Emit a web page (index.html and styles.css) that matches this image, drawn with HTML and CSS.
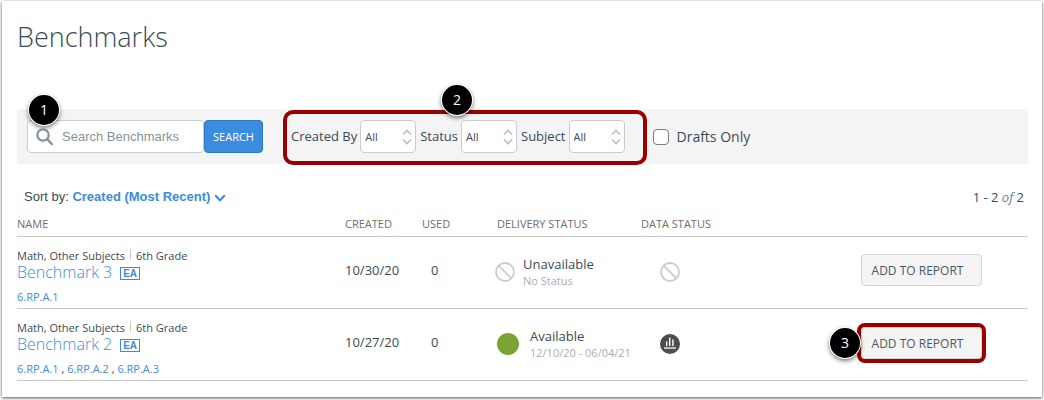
FILE: index.html
```html
<!DOCTYPE html>
<html lang="en">
<head>
    <meta charset="UTF-8">
    <meta name="viewport" content="width=device-width, initial-scale=1.0">
    <title>Benchmarks</title>
    <link rel="stylesheet" href="styles.css">
</head>
<body>

    <main class="page">
        <h1>Benchmarks</h1>

        <form class="toolbar">
            <div class="search">
                <span class="step step-search">1</span>
                <svg class="search-icon" width="18" height="18" viewBox="0 0 18 18">
                    <circle cx="7" cy="7" r="5.7"></circle>
                    <path d="M11.2 11.2 L16.5 16.8"></path>
                </svg>
                <input type="text" class="search-input" placeholder="Search Benchmarks" aria-label="Search Benchmarks">
                <button type="button" class="search-button">SEARCH</button>
            </div>

            <div class="filters">
                <span class="step step-filters">2</span>
                <label for="createdBy">Created By</label>
                <span class="select-box">
                    <select id="createdBy"><option>All</option></select>
                    <svg class="arrows" width="10" height="16" viewBox="0 0 10 16"><path d="M1 5.5 L5 1.5 L9 5.5 M1 10.5 L5 14.5 L9 10.5"></path></svg>
                </span>
                <label for="status">Status</label>
                <span class="select-box">
                    <select id="status"><option>All</option></select>
                    <svg class="arrows" width="10" height="16" viewBox="0 0 10 16"><path d="M1 5.5 L5 1.5 L9 5.5 M1 10.5 L5 14.5 L9 10.5"></path></svg>
                </span>
                <label for="subject">Subject</label>
                <span class="select-box">
                    <select id="subject"><option>All</option></select>
                    <svg class="arrows" width="10" height="16" viewBox="0 0 10 16"><path d="M1 5.5 L5 1.5 L9 5.5 M1 10.5 L5 14.5 L9 10.5"></path></svg>
                </span>
            </div>

            <input type="checkbox" id="drafts" class="drafts-box">
            <label for="drafts" class="drafts-label">Drafts Only</label>
        </form>

        <div class="list-bar">
            <div class="sort">
                Sort by: <a href="#">Created (Most Recent)<svg width="12" height="8" viewBox="0 0 12 8"><path d="M1.2 1.2 L6 6.2 L10.8 1.2"></path></svg></a>
            </div>
            <div class="count">1 - 2 <em>of</em> 2</div>
        </div>

        <table>
            <thead>
                <tr>
                    <th class="col-name">NAME</th>
                    <th class="col-created">CREATED</th>
                    <th class="col-used">USED</th>
                    <th class="col-delivery">DELIVERY STATUS</th>
                    <th class="col-data">DATA STATUS</th>
                    <th class="col-action"></th>
                </tr>
            </thead>
            <tbody>
                <tr>
                    <td>
                        <div class="meta"><span>Math, Other Subjects</span><span class="grade">6th Grade</span></div>
                        <div class="title"><a href="#">Benchmark 3</a><span class="badge">EA</span></div>
                        <div class="tags"><a href="#">6.RP.A.1</a></div>
                    </td>
                    <td class="value">10/30/20</td>
                    <td class="value used">0</td>
                    <td>
                        <div class="delivery">
                            <svg class="none" width="20" height="20" viewBox="0 0 20 20"><circle cx="10" cy="10" r="9"></circle><path d="M3.6 3.6 L16.4 16.4"></path></svg>
                            <div>
                                <div class="state">Unavailable</div>
                                <div class="detail">No Status</div>
                            </div>
                        </div>
                    </td>
                    <td class="data">
                        <svg class="none" width="20" height="20" viewBox="0 0 20 20"><circle cx="10" cy="10" r="9"></circle><path d="M3.6 3.6 L16.4 16.4"></path></svg>
                    </td>
                    <td>
                        <div class="action"><button type="button" class="add">ADD TO REPORT</button></div>
                    </td>
                </tr>
                <tr>
                    <td>
                        <div class="meta"><span>Math, Other Subjects</span><span class="grade">6th Grade</span></div>
                        <div class="title"><a href="#">Benchmark 2</a><span class="badge">EA</span></div>
                        <div class="tags"><a href="#">6.RP.A.1</a> , <a href="#">6.RP.A.2</a> , <a href="#">6.RP.A.3</a></div>
                    </td>
                    <td class="value">10/27/20</td>
                    <td class="value used">0</td>
                    <td>
                        <div class="delivery available">
                            <span class="dot"></span>
                            <div>
                                <div class="state">Available</div>
                                <div class="detail">12/10/20 - 06/04/21</div>
                            </div>
                        </div>
                    </td>
                    <td class="data">
                        <svg width="20" height="20" viewBox="0 0 20 20">
                            <circle cx="10" cy="10" r="10" fill="#4d4d4d"></circle>
                            <path d="M4 14 H16" stroke="#fff" stroke-width="1.3"></path>
                            <path d="M6.7 12 V7.6 M9.7 12 V3.6 M12.9 12 V5.6" stroke="#fff" stroke-width="1.4"></path>
                        </svg>
                    </td>
                    <td>
                        <div class="action marked">
                            <span class="step step-add">3</span>
                            <button type="button" class="add">ADD TO REPORT</button>
                        </div>
                    </td>
                </tr>
            </tbody>
        </table>
    </main>

</body>
</html>
```
FILE: styles.css
```css
* {
    box-sizing: border-box;
}

body {
    margin: 0;
    padding: 1px 2px 3px;
    background: #fff;
    color: #394b58;
    font-family: "Open Sans", sans-serif;
    font-size: 13px;
}

a {
    color: #3a8dde;
    text-decoration: none;
}

.page {
    padding: 16px 14px 16px 15px;
    background: #fff;
    box-shadow: 0 1px 3px rgba(0, 0, 0, 0.7);
}

h1 {
    margin: 0 0 52px;
    font-size: 27px;
    font-weight: 300;
    line-height: 40px;
}

.toolbar {
    display: flex;
    align-items: center;
    height: 55px;
    padding-left: 10px;
    background: #f4f4f4;
}

/* numbered callouts */
.step {
    position: absolute;
    width: 30px;
    height: 30px;
    border-radius: 50%;
    background: #000;
    color: #fff;
    font-size: 14px;
    line-height: 30px;
    text-align: center;
    box-shadow: 0 0 0 1px #fff, 0 2px 4px 1px rgba(0, 0, 0, 0.5);
}

.step-search {
    left: 2px;
    top: -25px;
}

.step-filters {
    left: 155px;
    top: -29px;
}

.step-add {
    left: -31px;
    top: 1px;
}

.search {
    position: relative;
    display: flex;
}

.search-icon {
    position: absolute;
    left: 9px;
    top: 8px;
    fill: none;
    stroke: #84919b;
    stroke-width: 2.2;
}

.search-input {
    width: 177px;
    height: 33px;
    padding: 0 8px 0 34px;
    border: 1px solid #c7cdd1;
    border-radius: 4px;
    background: #fff;
    font-family: "Liberation Sans", Arial, sans-serif;
    font-size: 13px;
}

.search-input::placeholder {
    color: #87939c;
}

.search-button {
    width: 59px;
    height: 33px;
    padding: 0;
    border: 1px solid #2b7abc;
    border-radius: 4px;
    background: #3a8dde;
    color: #fff;
    font-family: "Open Sans", sans-serif;
    font-size: 11px;
}

.filters {
    position: relative;
    display: flex;
    flex: none;
    align-items: center;
    height: 55px;
    margin: 2px 6px 0 20px;
    padding: 0 18px 3px 4px;
    border: 4px solid #900;
    border-radius: 10px;
}

.select-box {
    position: relative;
    display: flex;
    margin: 0 4px 0 3px;
}

.select-box:last-child {
    margin-right: 0;
}

.select-box select {
    width: 56px;
    height: 33px;
    padding: 0 4px;
    border: 1px solid #c7cdd1;
    border-radius: 4px;
    background: #fff;
    color: #4a4a4a;
    font-family: "Open Sans", sans-serif;
    font-size: 11px;
    appearance: none;
}

.arrows {
    position: absolute;
    right: 4px;
    top: 9px;
    fill: none;
    stroke: #bfbfbf;
    stroke-width: 1.6;
    pointer-events: none;
}

.drafts-box {
    width: 16px;
    height: 16px;
    margin: 0 8px 0 0;
    border: 1px solid #6b7f8c;
    border-radius: 4px;
    background: #fff;
    appearance: none;
}

.drafts-label {
    font-size: 14px;
}

.list-bar {
    display: flex;
    align-items: center;
    justify-content: space-between;
    height: 49px;
    padding: 16px 4px 0 7px;
}

.sort {
    font-family: "Liberation Sans", Arial, sans-serif;
    font-size: 13px;
}

.sort a {
    font-weight: bold;
}

.sort svg {
    margin-left: 4px;
    vertical-align: -1px;
    fill: none;
    stroke: #3a8dde;
    stroke-width: 2;
}

.count {
    font-size: 13px;
}

.count em {
    color: #73818c;
}

table {
    width: 100%;
    border-collapse: collapse;
    table-layout: fixed;
}

th {
    height: 23px;
    padding: 0 0 1px;
    border-bottom: 1px solid #c8c8c8;
    color: #6e6e6e;
    font-size: 11px;
    font-weight: 400;
    line-height: 16px;
    text-align: left;
}

td {
    height: 72px;
    padding: 0;
    border-bottom: 1px solid #c8c8c8;
}

.col-name {
    width: 328px;
}

.col-created {
    width: 77px;
}

.col-used {
    width: 75px;
}

.col-delivery {
    width: 144px;
}

.col-action {
    width: 167px;
}

.meta {
    display: flex;
    padding-top: 10px;
    font-size: 11px;
    line-height: 14px;
}

.grade {
    margin-left: 5px;
    padding-left: 6px;
    background: linear-gradient(#ccc, #ccc) no-repeat left top / 1px 11px;
}

.title {
    display: flex;
    align-items: center;
    font-size: 16px;
    font-weight: 300;
    line-height: 18px;
}

.badge {
    margin: 3px 0 0 8px;
    padding: 0 2px;
    border: 1px solid #3a8dde;
    color: #3a8dde;
    font-family: "Liberation Sans", Arial, sans-serif;
    font-size: 10px;
    font-weight: bold;
    line-height: 11px;
}

.tags {
    padding-top: 8px;
    font-size: 11px;
    line-height: 16px;
}

.value {
    padding-bottom: 4px;
}

.used {
    padding-left: 9px;
}

.delivery {
    display: flex;
    align-items: center;
    gap: 8px;
    margin-left: -2px;
    white-space: nowrap;
}

.available {
    gap: 11px;
    margin-left: 0;
}

.none {
    fill: none;
    stroke: #ccc;
    stroke-width: 1.8;
}

.dot {
    width: 22px;
    height: 22px;
    border-radius: 50%;
    background: #7ba336;
}

.state {
    line-height: 17px;
}

.detail {
    color: #adadad;
    font-size: 11px;
    line-height: 16px;
}

.data {
    padding-left: 19px;
}

.data svg {
    display: block;
}

.action {
    position: relative;
    width: 121px;
    margin-bottom: 4px;
}

.marked {
    margin-bottom: 2px;
}

.add {
    display: block;
    width: 121px;
    height: 32px;
    padding: 0 8px 0 0;
    border: 1px solid #d4d4d4;
    border-radius: 4px;
    background: #f4f4f4;
    color: #4a5863;
    font-family: "Open Sans", sans-serif;
    font-size: 12px;
}

.marked .add {
    outline: 4px solid #900;
}
```
